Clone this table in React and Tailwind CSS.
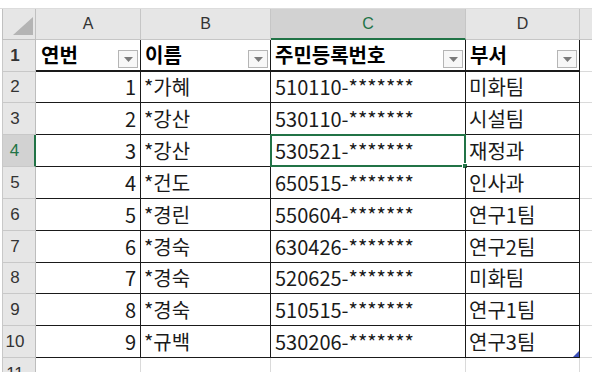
const ROWS = [
  [1, '*가혜', '510110-*******', '미화팀'],
  [2, '*강산', '530110-*******', '시설팀'],
  [3, '*강산', '530521-*******', '재정과'],
  [4, '*건도', '650515-*******', '인사과'],
  [5, '*경린', '550604-*******', '연구1팀'],
  [6, '*경숙', '630426-*******', '연구2팀'],
  [7, '*경숙', '520625-*******', '미화팀'],
  [8, '*경숙', '510515-*******', '연구1팀'],
  [9, '*규백', '530206-*******', '연구3팀'],
]

const HEIGHTS = ['h-[31px]', 'h-[32px]', 'h-[32px]', 'h-[32px]', 'h-[32px]', 'h-[32px]', 'h-[31px]', 'h-[32px]', 'h-[32px]']

const GREEN = '#217346'

function FilterButton() {
  return (
    <div className="ml-auto self-end mb-[2px] mr-[2px] w-[20px] h-[18px] border border-[#b5b5b5] bg-[#f7f7f7] flex items-center justify-center shrink-0">
      <svg width="9" height="5" viewBox="0 0 9 5">
        <polygon points="0,0 9,0 4.5,5" fill="#7a7a7a" />
      </svg>
    </div>
  )
}

function RowHead({ label, active }) {
  return (
    <div
      className={`w-[34px] ml-[2px] border-l border-[#c8c8c8] border-b flex items-center justify-center pr-[8px] text-[17px] font-['Liberation_Sans',sans-serif] ${
        active ? 'bg-[#d2d2d2] text-[#217346] border-r-2 border-r-[#217346]' : 'bg-[#e6e6e6] text-[#333] border-r border-r-[#bdbdbd]'
      }`}
    >
      {label}
    </div>
  )
}

export default function App() {
  return (
    <div className="w-[592px] h-[372px] overflow-hidden bg-white relative font-['Noto_Sans_CJK_KR',sans-serif] text-[#1a1a1a]">
      {/* top strip */}
      <div className="h-[9px] border-b border-[#dcdcdc]" />

      {/* column headers */}
      <div className="flex h-[31px] font-['Liberation_Sans',sans-serif] text-[16px] text-[#333]">
        <div className="w-[34px] ml-[2px] border-l border-r border-b border-[#c0c0c0] bg-[#e6e6e6] flex items-end justify-end pr-[2px] pb-[4px]">
          <svg width="20" height="18" viewBox="0 0 20 18">
            <polygon points="20,0 20,18 0,18" fill="#b4b4b4" />
          </svg>
        </div>
        <div className="w-[105px] bg-[#e6e6e6] border-r border-b border-[#c6c6c6] flex items-center justify-center">A</div>
        <div className="w-[130px] bg-[#e6e6e6] border-r border-b border-[#c6c6c6] flex items-center justify-center">B</div>
        <div className="w-[195px] bg-[#d2d2d2] border-r border-[#c6c6c6] border-b-2 border-b-[#217346] flex items-center justify-center text-[#217346]">C</div>
        <div className="w-[114px] bg-[#e6e6e6] border-r border-b border-[#c6c6c6] flex items-center justify-center">D</div>
        <div className="flex-1 bg-[#e6e6e6] border-b border-[#c6c6c6]" />
      </div>

      {/* header row 1 */}
      <div className="flex h-[32px] text-[20px] font-bold text-black">
        <RowHead label="1" />
        <div className="w-[105px] border-r border-b-2 border-[#1a1a1a] flex items-center pl-[5px]">
          <span>연번</span>
          <FilterButton />
        </div>
        <div className="w-[130px] border-r border-b-2 border-[#1a1a1a] flex items-center pl-[4px]">
          <span>이름</span>
          <FilterButton />
        </div>
        <div className="w-[195px] border-r border-b-2 border-[#1a1a1a] flex items-center pl-[4px]">
          <span>주민등록번호</span>
          <FilterButton />
        </div>
        <div className="w-[114px] border-r border-b-2 border-[#1a1a1a] flex items-center pl-[4px]">
          <span>부서</span>
          <FilterButton />
        </div>
        <div className="flex-1 border-b border-[#dadada]" />
      </div>

      {/* data rows */}
      {ROWS.map((r, i) => {
        const active = i === 2
        const last = i === ROWS.length - 1
        return (
          <div key={r[0]} className={`flex ${HEIGHTS[i]} text-[20px]`}>
            <RowHead label={i + 2} active={active} />
            <div className="w-[105px] border-r border-b border-[#1a1a1a] flex items-center justify-end pr-[4px]">{r[0]}</div>
            <div className="w-[130px] border-r border-b border-[#1a1a1a] flex items-center pl-[3px]">{r[1]}</div>
            <div className="relative w-[195px] border-r border-b border-[#1a1a1a] flex items-center pl-[4px]">
              {r[2]}
              {active && (
                <>
                  <div className="absolute -left-px -top-px -right-px -bottom-px border-2 border-[#217346]" />
                  <div className="absolute -right-[3px] -bottom-[3px] w-[6px] h-[6px] bg-[#217346] border border-white" />
                </>
              )}
            </div>
            <div className="relative w-[114px] border-r border-b border-[#1a1a1a] flex items-center pl-[3px]">
              {r[3]}
              {last && (
                <svg className="absolute right-0 bottom-0" width="6" height="6" viewBox="0 0 6 6">
                  <polygon points="6,0 6,6 0,6" fill="#3b4fb8" />
                </svg>
              )}
            </div>
            <div className="flex-1 border-b border-[#dadada]" />
          </div>
        )
      })}

      {/* row 11 */}
      <div className="flex h-[32px] text-[20px]">
        <RowHead label="11" />
        <div className="w-[105px] border-r border-b border-[#dadada]" />
        <div className="w-[130px] border-r border-b border-[#dadada]" />
        <div className="w-[195px] border-r border-b border-[#dadada]" />
        <div className="w-[114px] border-r border-b border-[#dadada]" />
        <div className="flex-1 border-b border-[#dadada]" />
      </div>
    </div>
  )
}
